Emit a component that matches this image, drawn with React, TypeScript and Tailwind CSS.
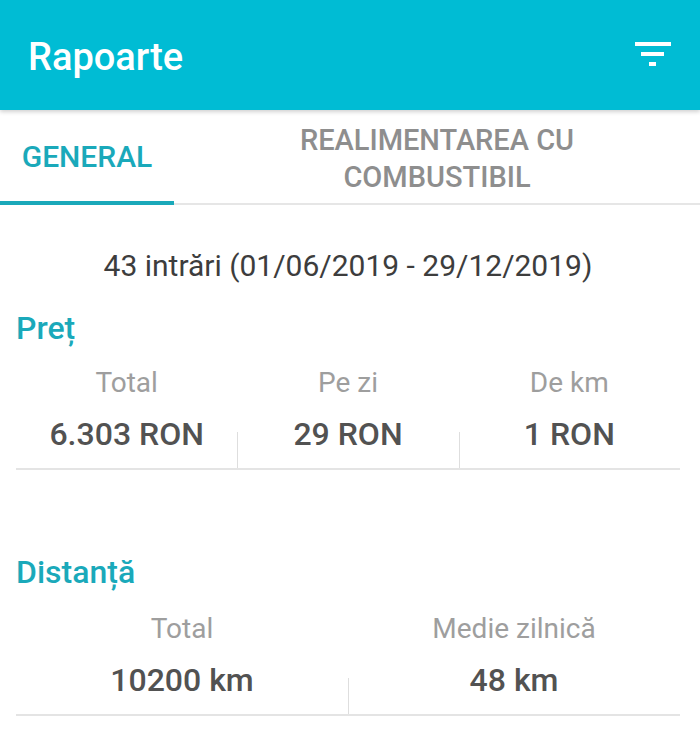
const teal = "#00bcd4";

function FilterIcon() {
  return (
    <svg width="36" height="26" viewBox="0 0 36 26" className="block">
      <rect x="0" y="0" width="36" height="4" fill="white" />
      <rect x="6" y="10" width="23" height="4" fill="white" />
      <rect x="14" y="20" width="7" height="4" fill="white" />
    </svg>
  );
}

function Stat({ label, value, divider }: { label: string; value: string; divider?: boolean }) {
  return (
    <div className="flex flex-col items-center">
      <div className="text-[28px] leading-[36px] text-[#9e9e9e]">{label}</div>
      <div className="relative flex w-full justify-center pb-[15px] pt-[14px]">
        {divider ? <span className="absolute bottom-0 left-0 top-[31px] w-px bg-[#dedede]" /> : null}
        <span className="text-[32px] font-medium leading-[38px] text-[#525252]">{value}</span>
      </div>
    </div>
  );
}

export default function App() {
  return (
    <div className="h-[750px] w-[700px] overflow-hidden bg-white font-['Roboto',sans-serif]">
      <header
        className="relative z-10 flex h-[110px] items-center justify-between pl-[28px] pr-[29px] shadow-[0_2px_4px_rgba(0,0,0,0.18)]"
        style={{ backgroundColor: teal }}
      >
        <h1 className="pt-[4px] text-[38px] font-medium text-white">Rapoarte</h1>
        <FilterIcon />
      </header>

      <nav className="flex h-[95px] border-b-2 border-[#e6e6e6]">
        <div className="relative flex w-[174px] items-center justify-center">
          <span className="text-[30px] font-medium text-[#1aa9ba]">GENERAL</span>
          <span className="absolute bottom-[-2px] left-0 right-0 h-[4px] bg-[#1aa9ba]" />
        </div>
        <div className="flex flex-1 items-center justify-center pt-[4px] text-center text-[29px] font-medium leading-[37px] text-[#8e8e8e]">
          REALIMENTAREA CU
          <br />
          COMBUSTIBIL
        </div>
      </nav>

      <main className="pl-[16px] pr-[20px]">
        <p className="pt-[45px] text-center text-[30px] leading-[32px] text-[#3d3d3d]">
          43 intrări (01/06/2019 - 29/12/2019)
        </p>

        <h2 className="mt-[26px] text-[32px] font-medium leading-[40px] text-[#1aa9ba]">Preț</h2>
        <div className="mt-[17px] grid grid-cols-3 border-b-2 border-[#e4e4e4]">
          <Stat label="Total" value="6.303 RON" />
          <Stat label="Pe zi" value="29 RON" divider />
          <Stat label="De km" value="1 RON" divider />
        </div>

        <h2 className="mt-[82px] text-[32px] font-medium leading-[40px] text-[#1aa9ba]">Distanță</h2>
        <div className="mt-[19px] grid grid-cols-2 border-b-2 border-[#e4e4e4]">
          <Stat label="Total" value="10200 km" />
          <Stat label="Medie zilnică" value="48 km" divider />
        </div>
      </main>
    </div>
  );
}
